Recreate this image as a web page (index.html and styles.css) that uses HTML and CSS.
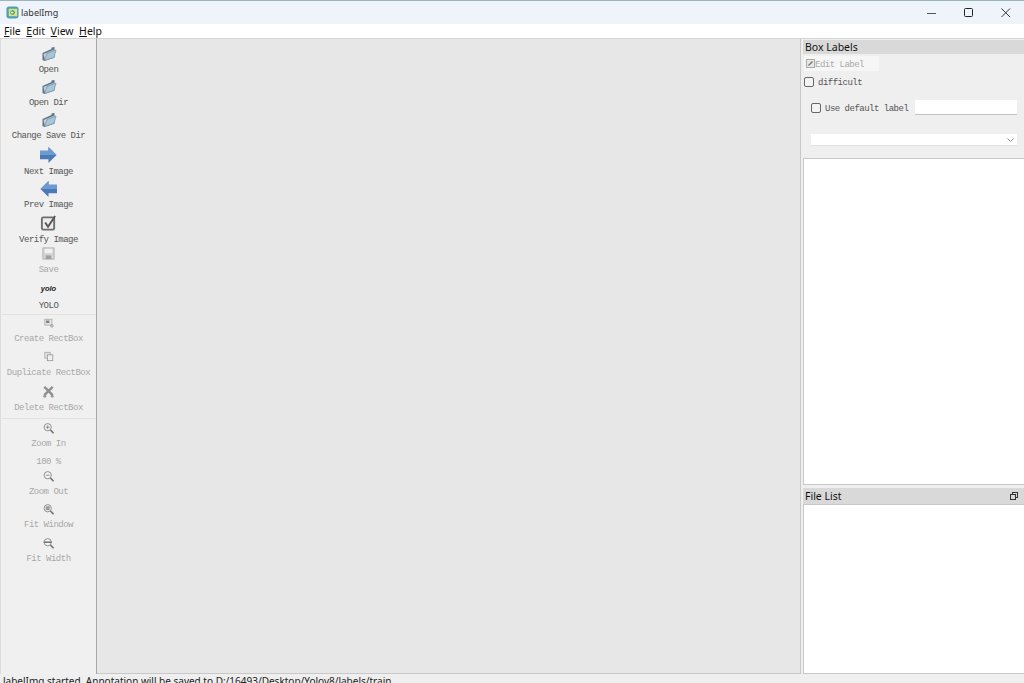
FILE: index.html
```html
<!DOCTYPE html>
<html lang="en">
  <head>
    <meta charset="UTF-8" />
    <title>labelImg</title>
    <link rel="stylesheet" href="styles.css">
  </head>
  <body>
    <svg class="defs" width="0" height="0">
      <defs>
        <g id="folder">
          <path d="M1.5 7 L10.5 3 L10.5 1.5 L13.5 1 L13.5 11.5 L3.5 15 L1.5 14 Z" fill="#5d7286"/>
          <path d="M2.5 8 L13.5 3.5 L13.5 11 L4 14.5 Z" fill="#c3d3de"/>
          <path d="M3.5 14.5 L6 7.5 L15 4 L13 11.5 Z" fill="#a6c6da" stroke="#6d8296" stroke-width=".6"/>
        </g>
        <g id="zoom">
          <circle cx="6" cy="6" r="4.6" fill="#f4f4f4" stroke="#8a8a8a" stroke-width="1.2"/>
          <path d="M9.5 9.5 L13.5 13.5" stroke="#6f6f6f" stroke-width="2"/>
        </g>
      </defs>
    </svg>
    <div class="titlebar">
      <svg class="app-icon" width="13" height="13" viewBox="0 0 14 14">
        <rect x=".5" y=".5" width="13" height="13" rx="3" fill="#4f9fb4"/>
        <rect x="3" y="3" width="9" height="8" fill="#d8e48c"/>
        <circle cx="7" cy="7" r="2.4" fill="#3f8f5a"/>
        <rect x="5.5" y="6" width="2.5" height="2" fill="#f2f2e0"/>
      </svg>
      <span class="app-name">labelImg</span>
      <div class="win-btns">
        <svg width="10" height="10" viewBox="0 0 10 10"><path d="M0 5.5 H9" stroke="#555" stroke-width="1"/></svg>
        <svg width="10" height="10" viewBox="0 0 10 10"><rect x=".5" y=".5" width="8" height="8" rx="1" fill="none" stroke="#222" stroke-width="1"/></svg>
        <svg width="10" height="10" viewBox="0 0 10 10"><path d="M.5 .5 L9 9 M9 .5 L.5 9" stroke="#333" stroke-width="1"/></svg>
      </div>
    </div>
    <div class="menubar">
      <span><u>F</u>ile</span>
      <span><u>E</u>dit</span>
      <span><u>V</u>iew</span>
      <span><u>H</u>elp</span>
    </div>
    <div class="main">
      <div class="toolbar">
        <div class="tool"><svg class="icon" width="16" height="16" viewBox="0 0 16 16"><use href="#folder"/></svg><span>Open</span></div>
        <div class="tool"><svg class="icon" width="16" height="16" viewBox="0 0 16 16"><use href="#folder"/></svg><span>Open Dir</span></div>
        <div class="tool"><svg class="icon" width="16" height="16" viewBox="0 0 16 16"><use href="#folder"/></svg><span>Change Save Dir</span></div>
        <div class="tool tool-big">
          <svg class="icon" width="17" height="17" viewBox="0 0 18 18"><path d="M0 4.5 H9 V.5 L17.5 9 L9 17.5 V13.5 H0 Z" fill="#4a7ab8"/><path d="M0 4.5 H9 V.5 L17.5 9 H0 Z" fill="#6d9ad0"/></svg>
          <span>Next Image</span>
        </div>
        <div class="tool tool-big tool-prev">
          <svg class="icon" width="17" height="17" viewBox="0 0 18 18"><path d="M18 4.5 H9 V.5 L.5 9 L9 17.5 V13.5 H18 Z" fill="#4a7ab8"/><path d="M18 4.5 H9 V.5 L.5 9 H18 Z" fill="#6d9ad0"/></svg>
          <span>Prev Image</span>
        </div>
        <div class="tool tool-big tool-verify">
          <svg class="icon" width="17" height="17" viewBox="0 0 18 18"><rect x="2" y="3" width="13" height="13" rx="1.5" fill="#ececec" stroke="#6e6e6e" stroke-width="2"/><path d="M5.5 8.5 L8.5 13 L16 1.5" fill="none" stroke="#555" stroke-width="2"/></svg>
          <span>Verify Image</span>
        </div>
        <div class="tool tool-drop tool-save off">
          <svg class="icon" width="13" height="13" viewBox="0 0 14 14"><rect x="1" y="1" width="12" height="12" fill="#d6d6d6" stroke="#b0b0b0"/><rect x="3" y="2" width="8" height="4.5" fill="#f2f2f2"/><rect x="4" y="9" width="6" height="4" fill="#a0a0a0"/></svg>
          <span>Save</span>
        </div>
        <div class="tool tool-yolo">
          <div class="yolo-mark">yolo</div>
          <span>YOLO</span>
        </div>
        <div class="sep"></div>
        <div class="tool tool-create off">
          <svg class="icon" width="10" height="10" viewBox="0 0 12 12"><rect x="1" y="1.5" width="8.5" height="7" fill="#e6e6e6" stroke="#a8a8a8"/><rect x="2.5" y="3" width="4" height="3" fill="#808080"/><circle cx="9.5" cy="9.5" r="1.5" fill="none" stroke="#909090"/></svg>
          <span>Create RectBox</span>
        </div>
        <div class="tool tool-drop tool-rect off">
          <svg class="icon" width="10" height="10" viewBox="0 0 12 12"><rect x="1" y="1" width="6.5" height="7" fill="#e2e2e2" stroke="#aaa"/><rect x="4" y="4" width="6.5" height="7" fill="#f0f0f0" stroke="#999"/></svg>
          <span>Duplicate RectBox</span>
        </div>
        <div class="tool tool-drop tool-rect off">
          <svg class="icon" width="13" height="13" viewBox="0 0 14 14"><path d="M2.5 2 L11.5 11 M11.5 2 L2.5 11" stroke="#8f8f8f" stroke-width="2.6"/><circle cx="3" cy="12" r="1.6" fill="#999"/><circle cx="11" cy="12" r="1.6" fill="#999"/></svg>
          <span>Delete RectBox</span>
        </div>
        <div class="sep sep-tight"></div>
        <div class="tool off">
          <svg class="icon" width="11" height="11" viewBox="0 0 14 14"><use href="#zoom"/><path d="M3.5 6 H8.5 M6 3.5 V8.5" stroke="#777"/></svg>
          <span>Zoom In</span>
        </div>
        <div class="zoom-value">100 %</div>
        <div class="tool off">
          <svg class="icon" width="11" height="11" viewBox="0 0 14 14"><use href="#zoom"/><path d="M3.5 6 H8.5" stroke="#777"/></svg>
          <span>Zoom Out</span>
        </div>
        <div class="tool tool-fit off">
          <svg class="icon" width="11" height="11" viewBox="0 0 14 14"><use href="#zoom"/><rect x="3.5" y="3.5" width="5" height="5" fill="#999"/></svg>
          <span>Fit Window</span>
        </div>
        <div class="tool off">
          <svg class="icon" width="11" height="11" viewBox="0 0 14 14"><use href="#zoom"/><path d="M1 6 H11" stroke="#777" stroke-width="2"/></svg>
          <span>Fit Width</span>
        </div>
      </div>
      <div class="canvas"></div>
      <div class="dock">
        <div class="dock-title">Box Labels</div>
        <div class="edit-label">
          <svg width="9" height="9" viewBox="0 0 9 9"><rect x=".5" y=".5" width="8" height="8" fill="#e8e8e8" stroke="#aaa"/><path d="M2.5 6.5 L6.5 2.5" stroke="#777" stroke-width="1.5"/></svg>
          <span>Edit Label</span>
        </div>
        <label class="check check-difficult"><i class="box"></i><span>difficult</span></label>
        <div class="default-row">
          <label class="check"><i class="box"></i><span>Use default label</span></label>
          <div class="text-input"></div>
        </div>
        <div class="combo">
          <svg width="7" height="4" viewBox="0 0 7 4"><path d="M.5 .5 L3.5 3.5 L6.5 .5" fill="none" stroke="#888"/></svg>
        </div>
        <div class="list list-labels"></div>
        <div class="dock-title dock-title-files">
          <span>File List</span>
          <svg width="8" height="8" viewBox="0 0 8 8"><rect x="2.5" y=".5" width="5" height="5" fill="none" stroke="#333"/><rect x=".5" y="2.5" width="5" height="5" fill="#d9d9d9" stroke="#333"/></svg>
        </div>
        <div class="list list-files"></div>
      </div>
    </div>
    <div class="statusbar">labelImg started. Annotation will be saved to D:/16493/Desktop/Yolov8/labels/train</div>
  </body>
</html>
```

FILE: styles.css
```css
* {
  box-sizing: border-box;
  margin: 0;
  padding: 0;
}
html,
body {
  width: 1024px;
  height: 683px;
  overflow: hidden;
}
body {
  background-color: #efefef;
  color: #222;
  font-family: "Noto Sans", "Open Sans", sans-serif;
  display: flex;
  flex-direction: column;
}
.defs {
  position: absolute;
}
.titlebar {
  height: 24px;
  flex: none;
  display: flex;
  align-items: center;
  padding-left: 6px;
  background-color: #eff3fa;
  border-top: 1px solid #9db5bd;
}
.app-name {
  margin-left: 2px;
  font-size: 9px;
  color: #333;
}
.win-btns {
  margin-left: auto;
  display: flex;
  gap: 27px;
  padding-right: 13px;
}
.menubar {
  height: 15px;
  flex: none;
  display: flex;
  align-items: center;
  gap: 5.5px;
  padding: 0 0 1px 4px;
  background-color: #fff;
  border-bottom: 1px solid #d4d4d4;
  font-size: 10.5px;
  color: #111;
}
.main {
  flex: 1;
  min-height: 0;
  display: flex;
}
.toolbar {
  width: 97px;
  flex: none;
  padding-top: 6px;
  background-color: #f0f0f0;
  border-right: 1px solid #a3a7ac;
  border-left: 1px solid #dcdcdc;
  display: flex;
  flex-direction: column;
  align-items: center;
}
.tool {
  width: 100%;
  height: 33px;
  display: flex;
  flex-direction: column;
  align-items: center;
  flex: none;
  font-family: "Liberation Mono", monospace;
  font-size: 9px;
  letter-spacing: -.5px;
  line-height: 17px;
  color: #555;
  white-space: nowrap;
}
.tool .icon {
  height: 16px;
  margin-top: 1px;
  flex: none;
}
.tool.off {
  color: #a8a8a8;
}
.tool-big {
  height: 34px;
}
.tool-big .icon {
  height: 18px;
  margin-top: 2px;
}
.tool-prev span {
  margin-top: -1px;
}
.tool-verify {
  height: 33px;
}
.tool-drop .icon {
  height: 17px;
  margin-top: 0;
}
.tool-save {
  height: 34px;
}
.tool-yolo {
  height: 35px;
}
.yolo-mark {
  height: 19px;
  font-family: "Liberation Sans", sans-serif;
  font-size: 7.5px;
  font-weight: bold;
  font-style: italic;
  letter-spacing: 0;
  line-height: 19px;
  color: #222;
}
.tool-create {
  height: 32px;
}
.tool-create .icon {
  margin-top: -1px;
}
.tool-rect {
  height: 35px;
}
.tool-fit {
  height: 34px;
}
.sep {
  width: 94px;
  height: 1px;
  flex: none;
  background-color: #e2e2e2;
  margin-bottom: 1px;
}
.sep-tight {
  margin-bottom: 0;
}
.zoom-value {
  height: 12px;
  flex: none;
  margin-top: 3px;
  font-family: "Liberation Mono", monospace;
  font-size: 9px;
  letter-spacing: -.5px;
  line-height: 15px;
  color: #a8a8a8;
}
.canvas {
  width: 704px;
  flex: none;
  background-color: #e7e7e7;
  border-right: 1px solid #c8c8c8;
  border-bottom: 1px solid #c8c8c8;
}
.dock {
  flex: 1;
  min-width: 0;
  margin-left: 2px;
  display: flex;
  flex-direction: column;
  padding-top: 1px;
}
.dock-title {
  height: 14px;
  flex: none;
  display: flex;
  align-items: center;
  justify-content: space-between;
  padding: 0 6px 0 2px;
  background-color: #d9d9d9;
  font-size: 10.5px;
  color: #111;
}
.edit-label {
  width: 75px;
  height: 15px;
  flex: none;
  margin: 2px 0 0 1px;
  padding-left: 2px;
  display: flex;
  align-items: center;
  background-color: #f6f6f6;
  font-family: "Liberation Mono", monospace;
  font-size: 9px;
  letter-spacing: -.5px;
  color: #a8a8a8;
}
.edit-label span {
  padding-top: 2px;
}
.check {
  display: flex;
  align-items: center;
  gap: 4px;
  font-family: "Liberation Mono", monospace;
  font-size: 9px;
  letter-spacing: -.5px;
  color: #555;
  white-space: nowrap;
}
.check span {
  padding-top: 2px;
}
.box {
  width: 10px;
  height: 10px;
  flex: none;
  border: 1px solid #666;
  border-radius: 2px;
  background-color: #f4f4f4;
}
.check-difficult {
  height: 12px;
  margin: 5px 0 0 1px;
}
.default-row {
  height: 15px;
  flex: none;
  margin: 12px 7px 0 8px;
  display: flex;
  align-items: center;
  justify-content: space-between;
}
.text-input {
  width: 102px;
  height: 15px;
  background-color: #fff;
  border-bottom: 1px solid #c4c4c4;
}
.combo {
  height: 12px;
  flex: none;
  margin: 19px 7px 0 8px;
  padding-right: 3px;
  display: flex;
  align-items: center;
  justify-content: flex-end;
  background-color: #fff;
  border-bottom: 1px solid #e2e2e2;
}
.list {
  background-color: #fff;
  border-top: 1px solid #c8c8c8;
  border-left: 1px solid #c8c8c8;
  border-bottom: 1px solid #c8c8c8;
}
.list-labels {
  height: 327px;
  flex: none;
  margin-top: 12px;
}
.dock-title-files {
  margin-top: 3px;
  height: 16px;
}
.list-files {
  flex: 1;
}
.statusbar {
  height: 9px;
  flex: none;
  padding-left: 3px;
  font-size: 10px;
  line-height: 15px;
  color: #222;
  white-space: nowrap;
}
```
